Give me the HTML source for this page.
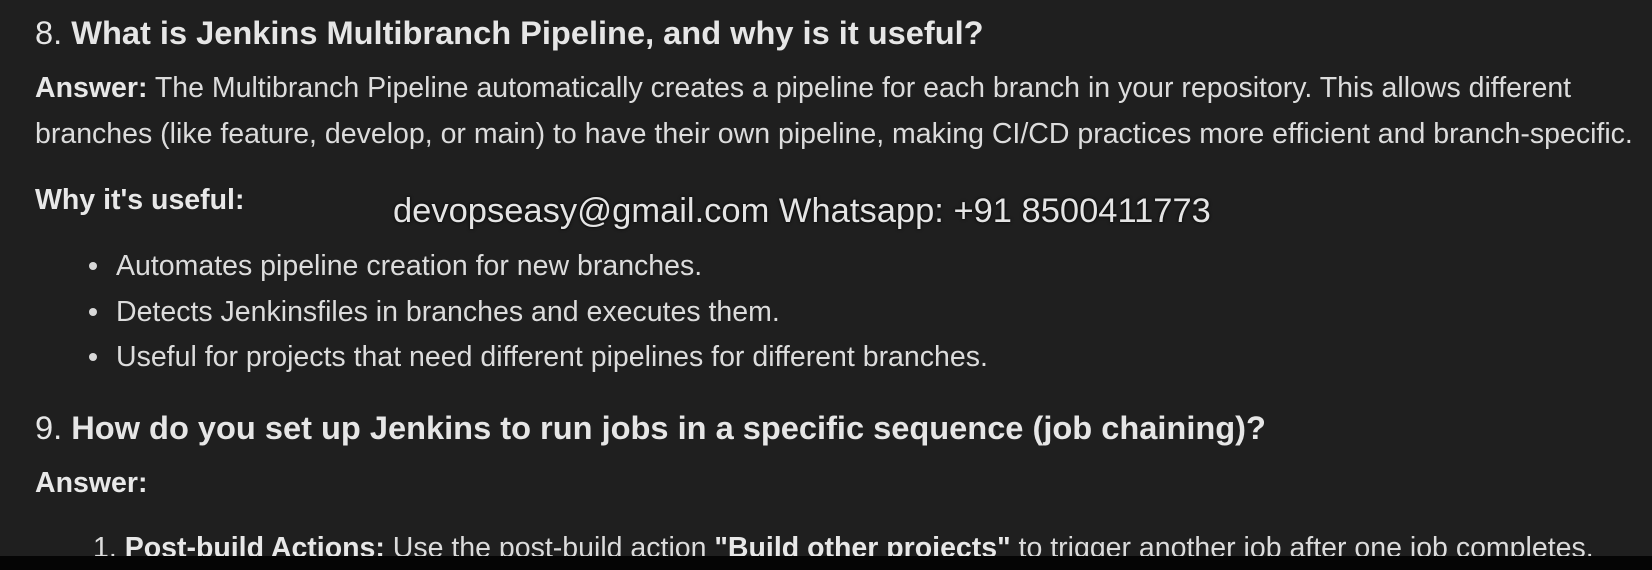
<!DOCTYPE html>
<html><head><meta charset="utf-8"><style>
html,body{margin:0;padding:0;}
body{width:1652px;height:570px;background:#1f1f1f;overflow:hidden;position:relative;font-family:"Liberation Sans",sans-serif;color:#dcdcdc;}
.l{position:absolute;white-space:nowrap;line-height:1;}
.h{font-size:32.6px;font-weight:bold;color:#e6e6e6;}
.t{font-size:28.5px;}
b{font-weight:bold;color:#e8e8e8;}
.bul{position:absolute;width:8px;height:8px;border-radius:50%;background:#d8d8d8;}
.wm{font-size:34.5px;color:#e4e4e4;text-shadow:0 0 3px #000;}
.bar{position:absolute;left:0;top:556px;width:1652px;height:14px;background:#050505;}
</style></head><body>
<div class="l h" style="left:35px;top:17px;"><span style="font-weight:normal">8. </span>What is Jenkins Multibranch Pipeline, and why is it useful?</div>
<div class="l t" style="left:35px;top:74px;"><b>Answer:</b> The Multibranch Pipeline automatically creates a pipeline for each branch in your repository. This allows different</div>
<div class="l t" style="left:35px;top:120px;">branches (like feature, develop, or main) to have their own pipeline, making CI/CD practices more efficient and branch-specific.</div>
<div class="l t" style="left:35px;top:186px;"><b>Why it's useful:</b></div>
<div class="l wm" style="left:393px;top:194px;">devopseasy@gmail.com Whatsapp: +91 8500411773</div>
<div class="bul" style="left:89px;top:262px;"></div>
<div class="l t" style="left:116px;top:252px;">Automates pipeline creation for new branches.</div>
<div class="bul" style="left:89px;top:308px;"></div>
<div class="l t" style="left:116px;top:298px;">Detects Jenkinsfiles in branches and executes them.</div>
<div class="bul" style="left:89px;top:353px;"></div>
<div class="l t" style="left:116px;top:343px;">Useful for projects that need different pipelines for different branches.</div>
<div class="l h" style="left:35px;top:412px;"><span style="font-weight:normal">9. </span>How do you set up Jenkins to run jobs in a specific sequence (job chaining)?</div>
<div class="l t" style="left:35px;top:469px;"><b>Answer:</b></div>
<div class="l t" style="left:93px;top:534px;">1. <b>Post-build Actions:</b> Use the post-build action <b>"Build other projects"</b> to trigger another job after one job completes.</div>
<div class="bar"></div>
</body></html>
